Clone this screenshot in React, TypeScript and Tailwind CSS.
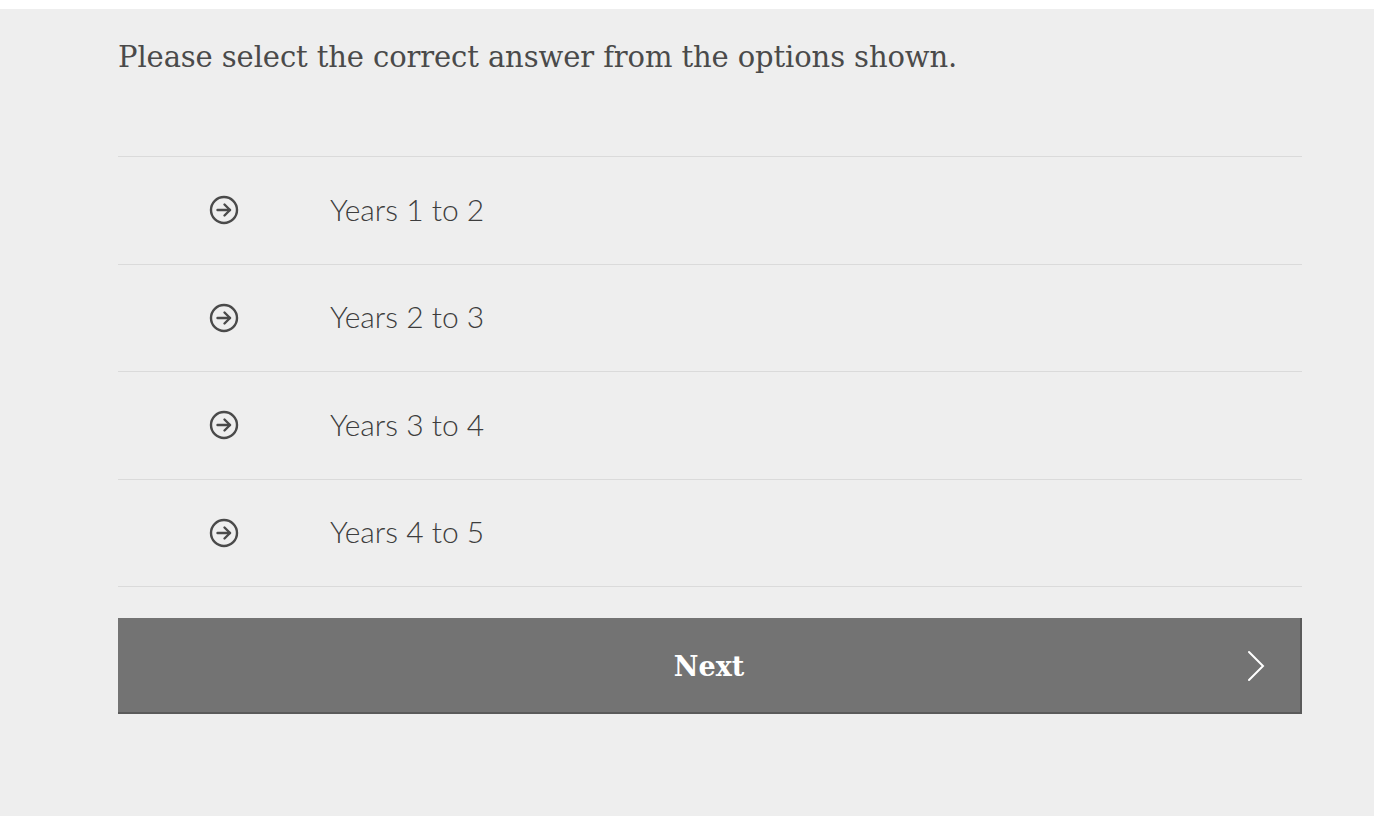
import React from 'react';

const options = ['Years 1 to 2', 'Years 2 to 3', 'Years 3 to 4', 'Years 4 to 5'];

function ArrowCircle() {
  return (
    <svg width="30" height="30" viewBox="0 0 30 30" fill="none" stroke="#4a4a4a" strokeWidth="2.4" strokeLinecap="round" strokeLinejoin="round">
      <circle cx="15" cy="15" r="13" />
      <path d="M8.5 15h12.5" />
      <path d="M15.5 9.5L21 15l-5.5 5.5" />
    </svg>
  );
}

export default function App() {
  return (
    <div className="min-h-[816px] bg-white pt-[9px]">
      <div className="min-h-[807px] bg-[#eeeeee] pl-[118px] pr-[72px] pt-[36px]">
        <p className="text-[29px] leading-[24px] text-[#4a4a4a] [font-family:'DejaVu_Serif',serif] tracking-[-0.1px]">
          Please select the correct answer from the options shown.
        </p>
        <div className="mt-[87px] border-t border-[#dadada]">
          {options.map((o) => (
            <div key={o} className="flex h-[107.5px] items-center border-b border-[#dadada]">
              <div className="flex w-[212px] justify-center">
                <ArrowCircle />
              </div>
              <span className="-mt-[2px] text-[30px] font-light text-[#3d3d3d] [font-family:Lato,sans-serif]">{o}</span>
            </div>
          ))}
        </div>
        <button className="relative mt-[31px] flex h-[96px] w-full items-center justify-center border-r-2 border-b-2 border-[#5a5a5a] bg-[#737373] text-white">
          <span className="mt-[4px] text-[27px] font-bold [font-family:'DejaVu_Serif',serif]">Next</span>
          <svg className="absolute right-[34px] top-[32px]" width="20" height="32" viewBox="0 0 20 32" fill="none" stroke="white" strokeWidth="2" strokeLinecap="round">
            <path d="M3 2l14 14L3 30" />
          </svg>
        </button>
      </div>
    </div>
  );
}
